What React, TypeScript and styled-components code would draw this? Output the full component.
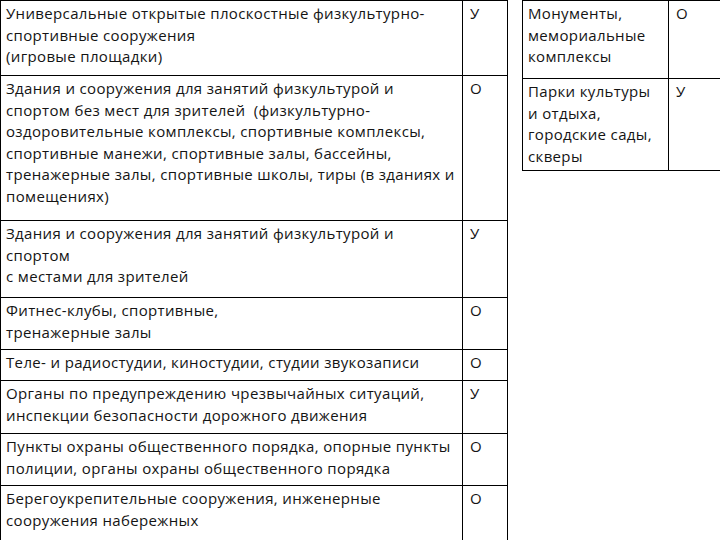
import React, { FC } from "react";
import styled, { createGlobalStyle } from "styled-components";

interface RowData {
	name: string;
	mark: string;
	height: number;
}

const GlobalStyle = createGlobalStyle`
	html, body {
		margin: 0;
		padding: 0;
		background: #fff;
	}
`;

const Page = styled.div`
	display: flex;
	align-items: flex-start;
	gap: 14px;
	width: 720px;
	height: 540px;
	overflow: hidden;
	background: #fff;
	font-family: "Open Sans", "Noto Sans", sans-serif;
	font-size: 15px;
	letter-spacing: 0.35px;
	line-height: 21.5px;
	color: #141414;
`;

const Table = styled.div<{ $columns: string }>`
	display: grid;
	grid-template-columns: ${(p) => p.$columns};
	flex-shrink: 0;
	border-top: 1px solid #000;
	border-left: 1px solid #000;
`;

const Cell = styled.div<{ $h: number }>`
	box-sizing: border-box;
	height: ${(p) => p.$h}px;
	padding: 2px 4px 0 5px;
	border-right: 1px solid #000;
	border-bottom: 1px solid #000;
	white-space: pre;
	overflow: hidden;
`;

const Mark = styled(Cell)`
	padding-left: 7px;
`;

const mainRows: RowData[] = [
	{
		name: "Универсальные открытые плоскостные физкультурно-\nспортивные сооружения\n(игровые площадки)",
		mark: "У",
		height: 75,
	},
	{
		name: "Здания и сооружения для занятий физкультурой и\nспортом без мест для зрителей  (физкультурно-\nоздоровительные комплексы, спортивные комплексы,\nспортивные манежи, спортивные залы, бассейны,\nтренажерные залы, спортивные школы, тиры (в зданиях и\nпомещениях)",
		mark: "О",
		height: 145,
	},
	{
		name: "Здания и сооружения для занятий физкультурой и\nспортом\nс местами для зрителей",
		mark: "У",
		height: 77,
	},
	{ name: "Фитнес-клубы, спортивные,\nтренажерные залы", mark: "О", height: 52 },
	{ name: "Теле- и радиостудии, киностудии, студии звукозаписи", mark: "О", height: 31 },
	{
		name: "Органы по предупреждению чрезвычайных ситуаций,\nинспекции безопасности дорожного движения",
		mark: "У",
		height: 53,
	},
	{
		name: "Пункты охраны общественного порядка, опорные пункты\nполиции, органы охраны общественного порядка",
		mark: "О",
		height: 52,
	},
	{
		name: "Берегоукрепительные сооружения, инженерные\nсооружения набережных",
		mark: "О",
		height: 70,
	},
];

const sideRows: RowData[] = [
	{ name: "Монументы,\nмемориальные\nкомплексы", mark: "О", height: 78 },
	{ name: "Парки культуры\nи отдыха,\nгородские сады,\nскверы", mark: "У", height: 92 },
];

const ZoneTable: FC<{ rows: RowData[]; columns: string }> = ({ rows, columns }) => (
	<Table $columns={columns}>
		{rows.map((row, i) => (
			<React.Fragment key={i}>
				<Cell $h={row.height}>{row.name}</Cell>
				<Mark $h={row.height}>{row.mark}</Mark>
			</React.Fragment>
		))}
	</Table>
);

export default function App() {
	return (
		<>
			<GlobalStyle />
			<Page>
				<ZoneTable rows={mainRows} columns="462px 45px" />
				<ZoneTable rows={sideRows} columns="146px 60px" />
			</Page>
		</>
	);
}
